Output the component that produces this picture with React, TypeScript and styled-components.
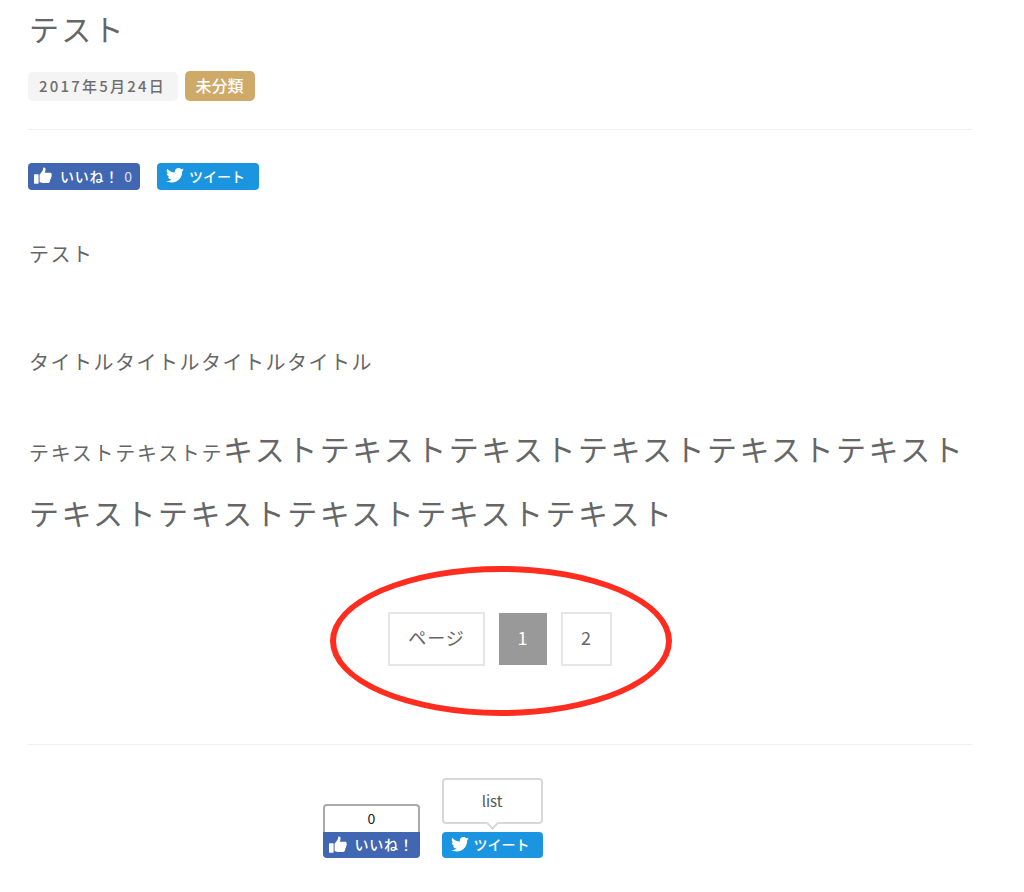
import styled, { createGlobalStyle } from "styled-components";

const GlobalStyle = createGlobalStyle`
  html, body {
    margin: 0;
    padding: 0;
    background: #fff;
  }
  body {
    font-family: "Noto Sans CJK JP", "Liberation Sans", sans-serif;
    color: #666;
  }
`;

const ThumbIcon = () => (
  <svg width="18" height="17" viewBox="0 0 18 16.4" fill="#fff">
    <rect x="0" y="7" width="4.6" height="9.4" rx="0.6" />
    <path d="M5.6 7.5 L8.4 3.6 C9 2.8 9 1.6 9.2 0.6 C9.3 0 10.6 0 11.2 0.8 C11.9 1.8 11.5 3.6 10.8 5.4 L16.2 5.4 C17.6 5.4 18 6.6 17.5 7.5 C18 8.4 17.8 9.4 17 9.9 C17.3 10.8 17 11.7 16.2 12.1 C16.4 13.2 15.8 15.6 14.4 15.6 L9 15.6 C7.4 15.6 6.6 15 5.6 15 Z" />
  </svg>
);

const BirdIcon = () => (
  <svg width="18" height="15" viewBox="0 0 24 20" fill="#fff">
    <path d="M24 2.4c-.9.4-1.8.7-2.8.8 1-.6 1.8-1.6 2.2-2.7-1 .6-2 1-3.1 1.2C19.3.7 18 0 16.6 0c-2.7 0-4.9 2.2-4.9 4.9 0 .4 0 .8.1 1.1C7.7 5.8 4.1 3.9 1.7.9c-.4.7-.7 1.6-.7 2.5 0 1.7.9 3.2 2.2 4.1-.8 0-1.6-.2-2.2-.6v.1c0 2.4 1.7 4.4 3.9 4.8-.4.1-.8.2-1.3.2-.3 0-.6 0-.9-.1.6 2 2.4 3.4 4.6 3.4-1.7 1.3-3.8 2.1-6.1 2.1-.4 0-.8 0-1.2-.1C2.2 18.4 4.8 19.2 7.5 19.2c9.1 0 14-7.5 14-14v-.6c1-.7 1.8-1.5 2.5-2.2z" />
  </svg>
);

export default function App() {
  return (
    <>
      <GlobalStyle />
      <Page>
        <Title>テスト</Title>
        <Meta>
          <DateTag>2017年5月24日</DateTag>
          <CategoryTag>未分類</CategoryTag>
        </Meta>
        <Rule />
        <ShareRow>
          <ShareButton $color="#4267b2" $width={112}>
            <ThumbIcon />
            <ButtonLabel>いいね！</ButtonLabel>
            <Count>0</Count>
          </ShareButton>
          <ShareButton $color="#1b95e0" $width={102} $tweet>
            <BirdIcon />
            <ButtonLabel>ツイート</ButtonLabel>
          </ShareButton>
        </ShareRow>
        <Paragraph>テスト</Paragraph>
        <Subtitle>タイトルタイトルタイトルタイトル</Subtitle>
        <Body>
          <Small>テキストテキストテ</Small>
          キストテキストテキストテキストテキストテキストテキストテキストテキストテキストテキスト
        </Body>
        <PagerArea>
          <Pager>
            <PageLabel>ページ</PageLabel>
            <Current>1</Current>
            <PageLink>2</PageLink>
          </Pager>
          <Circle />
        </PagerArea>
        <BottomRule />
        <BottomShare>
          <BalloonColumn>
            <CountBox>0</CountBox>
            <BottomButton $color="#4267b2" $width={97} $flatTop>
              <ThumbIcon />
              <ButtonLabel>いいね！</ButtonLabel>
            </BottomButton>
          </BalloonColumn>
          <BalloonColumn>
            <ListBubble>list</ListBubble>
            <BottomButton $color="#1b95e0" $width={101} $tweet>
              <BirdIcon />
              <ButtonLabel>ツイート</ButtonLabel>
            </BottomButton>
          </BalloonColumn>
        </BottomShare>
      </Page>
    </>
  );
}

const Page = styled.div`
  width: 944px;
  height: 892px;
  margin-left: 28px;
  overflow: hidden;
`;

const Title = styled.h1`
  margin: 8px 0 0 1px;
  font-size: 30px;
  line-height: 40px;
  letter-spacing: 2.2px;
  font-weight: 400;
`;

const Meta = styled.div`
  display: flex;
  gap: 7px;
  margin-top: 23px;
  height: 30px;
`;

const DateTag = styled.span`
  display: flex;
  align-items: center;
  box-sizing: border-box;
  width: 150px;
  height: 29px;
  margin-top: 1px;
  padding: 0 0 2px 11px;
  background: #f4f4f4;
  border-radius: 5px;
  font-size: 15px;
  line-height: 1;
  font-weight: 500;
  letter-spacing: 2.2px;
  color: #6e6e6e;
`;

const CategoryTag = styled.span`
  display: flex;
  align-items: center;
  justify-content: center;
  box-sizing: border-box;
  width: 70px;
  padding: 0 1px 2px 0;
  background: #cfa968;
  border-radius: 5px;
  font-size: 16px;
  line-height: 1;
  font-weight: 500;
  color: #fff;
`;

const Rule = styled.hr`
  margin: 28px 0 0;
  border: 0;
  border-top: 1px solid #f0f0f0;
`;

const BottomRule = styled(Rule)`
  margin-top: 28px;
`;

const ShareRow = styled.div`
  display: flex;
  gap: 17px;
  margin-top: 33px;
`;

const ShareButton = styled.div<{ $color: string; $width: number; $flatTop?: boolean; $tweet?: boolean }>`
  display: flex;
  align-items: center;
  gap: ${(p) => (p.$tweet ? "5px" : "8px")};
  box-sizing: border-box;
  width: ${(p) => p.$width}px;
  height: 27px;
  padding-left: ${(p) => (p.$tweet ? "9px" : "6px")};
  padding-bottom: 2px;
  background: ${(p) => p.$color};
  border-radius: ${(p) => (p.$flatTop ? "0 0 4px 4px" : "4px")};
  font-size: 14px;
  line-height: 1;
  font-weight: 500;
  letter-spacing: ${(p) => (p.$tweet ? "0" : "0.8px")};
  color: #fff;

  svg {
    flex: none;
  }
`;

const BottomButton = styled(ShareButton)`
  height: 26px;
`;

const ButtonLabel = styled.span`
  white-space: nowrap;
`;

const Count = styled.span`
  font-weight: 400;
  margin-left: -3px;
  opacity: 0.8;
`;

const Paragraph = styled.p`
  margin: 50px 0 0 1px;
  font-size: 20px;
  line-height: 28px;
  letter-spacing: 1.5px;
`;

const Subtitle = styled(Paragraph)`
  margin-top: 80px;
`;

const Body = styled.p`
  margin: 40px 0 0 1px;
  font-size: 30px;
  line-height: 64px;
  letter-spacing: 2.5px;
`;

const Small = styled.span`
  font-size: 20px;
  line-height: 1;
  letter-spacing: 1.7px;
`;

const PagerArea = styled.div`
  position: relative;
  display: flex;
  justify-content: center;
  margin-top: 68px;
  height: 104px;
`;

const Pager = styled.div`
  display: flex;
  align-items: flex-start;
  gap: 14px;
`;

const PageCell = styled.span`
  display: flex;
  align-items: center;
  justify-content: center;
  box-sizing: border-box;
  height: 54px;
  padding-bottom: 4px;
  border: 2px solid #e6e6e6;
  font-size: 18px;
  line-height: 1;
  letter-spacing: 1px;
`;

const PageLabel = styled(PageCell)`
  width: 97px;
`;

const Current = styled(PageCell)`
  width: 48px;
  height: 52px;
  margin-top: 1px;
  background: #999;
  border-color: #999;
  color: #fff;
`;

const PageLink = styled(PageCell)`
  width: 51px;
`;

const Circle = styled.div`
  position: absolute;
  left: 302px;
  top: -46px;
  width: 342px;
  height: 150px;
  box-sizing: border-box;
  border: 6px solid #ff2d1f;
  border-radius: 50%;
`;

const BottomShare = styled.div`
  display: flex;
  justify-content: center;
  align-items: flex-end;
  gap: 22px;
  margin-top: 33px;
  padding-right: 135px;
`;

const BalloonColumn = styled.div`
  display: flex;
  flex-direction: column;
`;

const CountBox = styled.div`
  box-sizing: border-box;
  width: 97px;
  height: 28px;
  padding-left: 1px;
  border: 2px solid #aaa;
  border-bottom: 0;
  border-radius: 4px 4px 0 0;
  font-size: 14px;
  line-height: 24px;
  text-align: center;
  color: #222;
`;

const ListBubble = styled.div`
  position: relative;
  box-sizing: border-box;
  width: 101px;
  height: 46px;
  margin-bottom: 8px;
  border: 2px solid #d8d8d8;
  border-radius: 4px;
  font-size: 15px;
  line-height: 42px;
  text-align: center;
  color: #555;

  &::after {
    content: "";
    position: absolute;
    left: 44px;
    bottom: -6px;
    width: 7px;
    height: 7px;
    background: #fff;
    border-right: 2px solid #d8d8d8;
    border-bottom: 2px solid #d8d8d8;
    transform: rotate(45deg);
  }
`;
